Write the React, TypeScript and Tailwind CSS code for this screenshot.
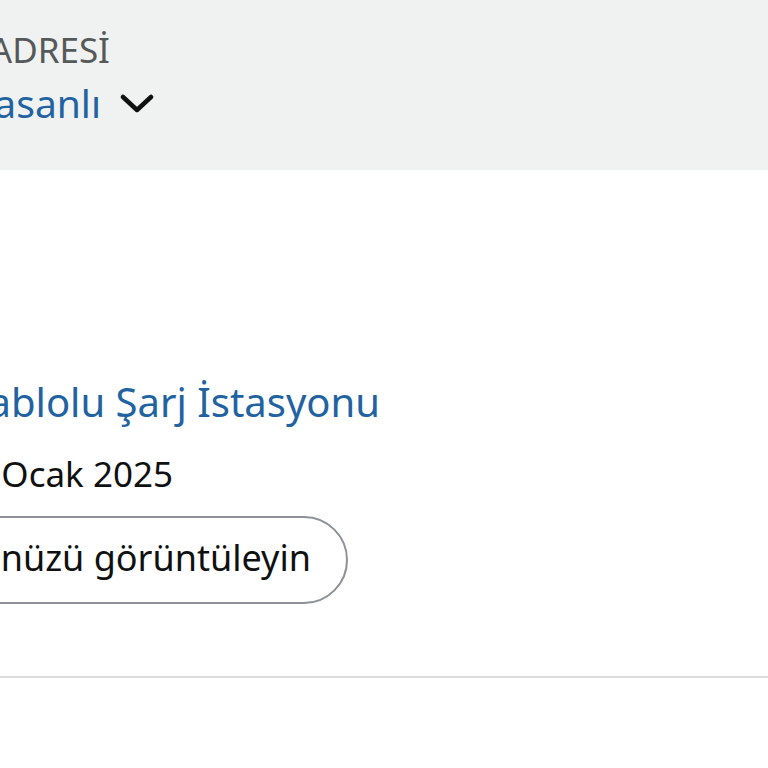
import React from "react";

export default function App() {
  return (
    <div
      className="w-[768px] h-[768px] overflow-hidden bg-white text-[#0f1111]"
      style={{ fontFamily: '"Noto Sans", "Open Sans", Arial, sans-serif' }}
    >
      <div className="h-[170px] bg-[#f0f2f2] pt-[30px]">
        <div className="flex w-[110px] justify-end">
          <span className="shrink-0 whitespace-nowrap text-[35px] leading-[40px] text-[#565959]">
            TESLİMAT ADRESİ
          </span>
        </div>
        <div className="mt-[10px] flex w-[154px] items-center justify-end">
          <span className="shrink-0 whitespace-nowrap text-[39px] leading-[46px] text-[#2162a1]">
            Ahmet Hasanlı
          </span>
          <svg
            className="ml-[19px] mt-[2px] shrink-0"
            width="34"
            height="20"
            viewBox="0 0 34 20"
            fill="none"
          >
            <path
              d="M3 3 L17 16 L31 3"
              stroke="#0f1111"
              strokeWidth="4.5"
              strokeLinecap="round"
              strokeLinejoin="round"
            />
          </svg>
        </div>
      </div>

      <div className="pt-[208px]">
        <div className="flex w-[380px] justify-end">
          <span className="shrink-0 whitespace-nowrap text-[40px] leading-[48px] text-[#2162a1]">
            Type 2 Kablolu Şarj İstasyonu
          </span>
        </div>
        <div className="mt-[28px] flex w-[173px] justify-end">
          <span className="shrink-0 whitespace-nowrap text-[35px] leading-[40px]">
            Teslim edildi 14 Ocak 2025
          </span>
        </div>
        <div className="mt-[22px] flex w-[348px] justify-end">
          <button className="flex h-[88px] shrink-0 items-center whitespace-nowrap rounded-full border-2 border-[#8d9096] bg-white pb-[5px] pl-[60px] pr-[35px] text-[36px] leading-[44px] text-[#0f1111]">
            Ürününüzü görüntüleyin
          </button>
        </div>
        <div className="mt-[72px] h-[2px] w-full bg-[#dcdcdc]" />
      </div>
    </div>
  );
}
